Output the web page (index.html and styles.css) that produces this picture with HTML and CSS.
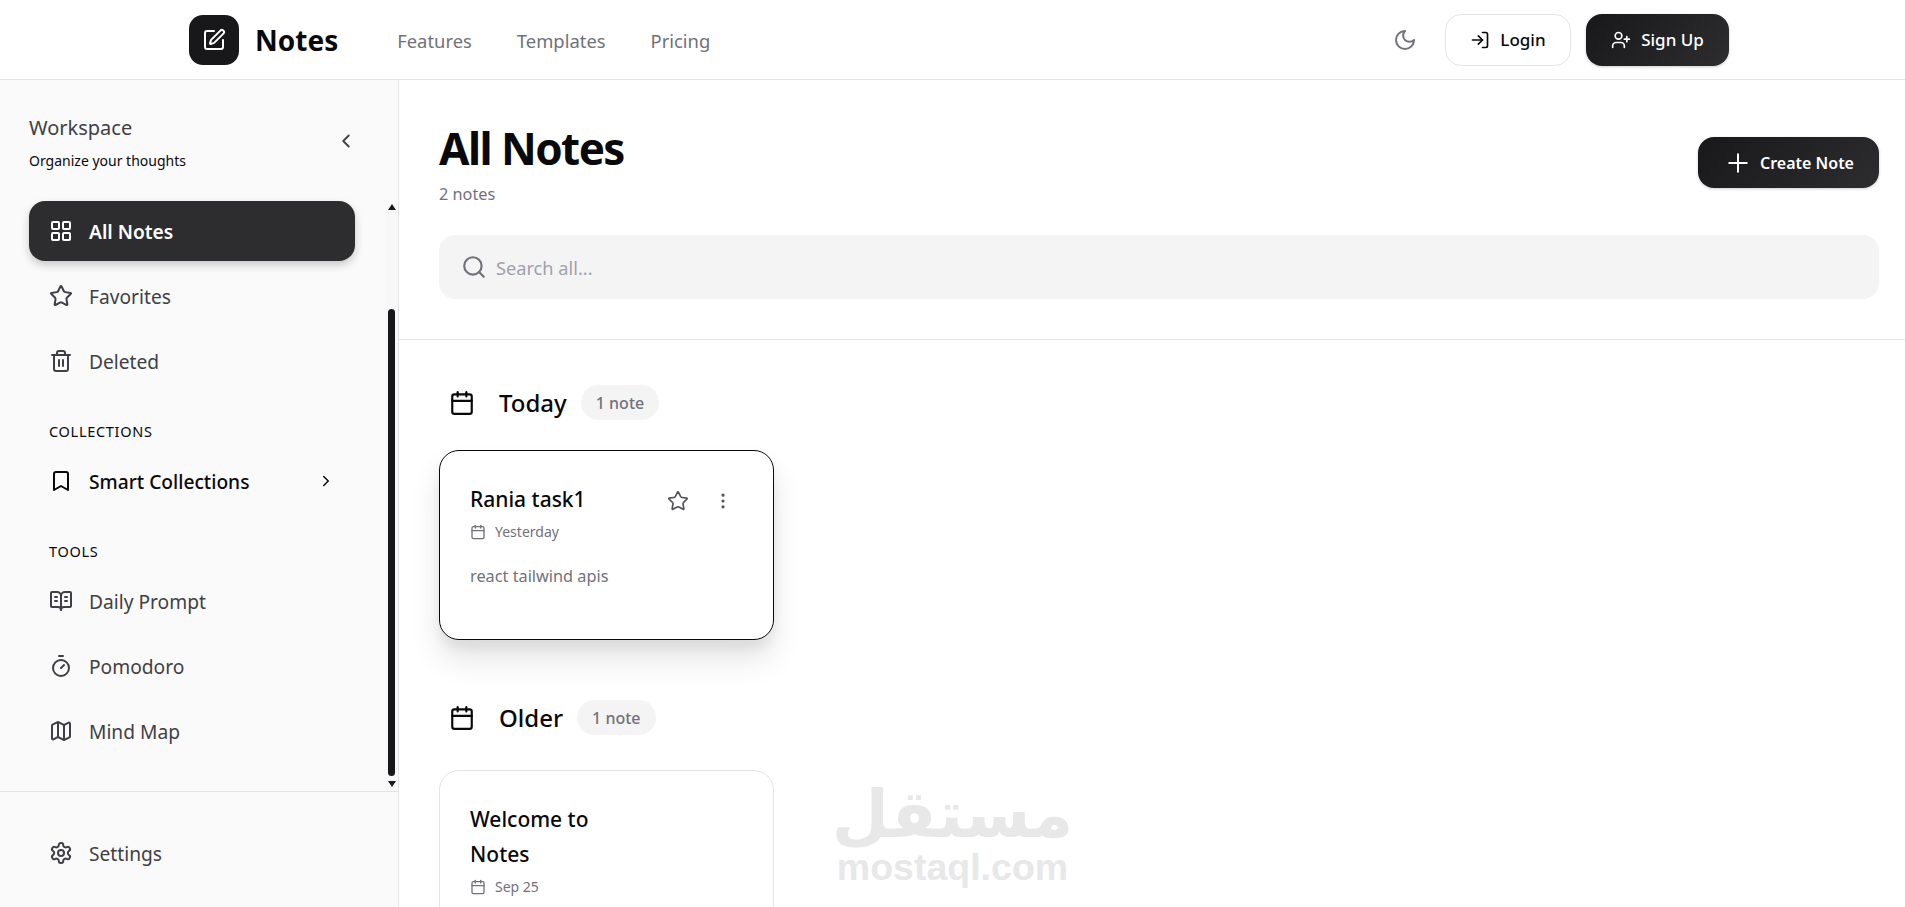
FILE: index.html
```html
<!DOCTYPE html>
<html lang="en">
<head>
<meta charset="utf-8">
<title>Notes</title>
<link rel="stylesheet" href="styles.css">
</head>
<body>
<svg class="defs" width="0" height="0">
  <symbol id="i-pen" viewBox="0 0 24 24"><path d="M12 3H5a2 2 0 0 0-2 2v14a2 2 0 0 0 2 2h14a2 2 0 0 0 2-2v-7"/><path d="M18.375 2.625a1 1 0 0 1 3 3l-9.013 9.014a2 2 0 0 1-.853.505l-2.873.84a.5.5 0 0 1-.62-.62l.84-2.873a2 2 0 0 1 .506-.852z"/></symbol>
  <symbol id="i-moon" viewBox="0 0 24 24"><path d="M12 3a6 6 0 0 0 9 9 9 9 0 1 1-9-9Z"/></symbol>
  <symbol id="i-login" viewBox="0 0 24 24"><path d="M15 3h4a2 2 0 0 1 2 2v14a2 2 0 0 1-2 2h-4"/><path d="m10 17 5-5-5-5"/><path d="M15 12H3"/></symbol>
  <symbol id="i-userplus" viewBox="0 0 24 24"><path d="M16 21v-2a4 4 0 0 0-4-4H6a4 4 0 0 0-4 4v2"/><circle cx="9" cy="7" r="4"/><path d="M19 8v6"/><path d="M22 11h-6"/></symbol>
  <symbol id="i-plus" viewBox="0 0 24 24"><path d="M5 12h14"/><path d="M12 5v14"/></symbol>
  <symbol id="i-search" viewBox="0 0 24 24"><circle cx="11" cy="11" r="8"/><path d="m21 21-4.3-4.3"/></symbol>
  <symbol id="i-grid" viewBox="0 0 24 24"><rect x="3" y="3" width="7" height="7" rx="1"/><rect x="14" y="3" width="7" height="7" rx="1"/><rect x="14" y="14" width="7" height="7" rx="1"/><rect x="3" y="14" width="7" height="7" rx="1"/></symbol>
  <symbol id="i-star" viewBox="0 0 24 24"><path d="M11.525 2.295a.53.53 0 0 1 .95 0l2.31 4.679a2.123 2.123 0 0 0 1.595 1.16l5.166.756a.53.53 0 0 1 .294.904l-3.736 3.638a2.123 2.123 0 0 0-.611 1.878l.882 5.14a.53.53 0 0 1-.771.56l-4.618-2.428a2.122 2.122 0 0 0-1.973 0L6.396 21.01a.53.53 0 0 1-.77-.56l.881-5.139a2.122 2.122 0 0 0-.611-1.879L2.16 9.795a.53.53 0 0 1 .294-.906l5.165-.755a2.122 2.122 0 0 0 1.597-1.16z"/></symbol>
  <symbol id="i-trash" viewBox="0 0 24 24"><path d="M3 6h18"/><path d="M19 6v14c0 1-1 2-2 2H7c-1 0-2-1-2-2V6"/><path d="M8 6V4c0-1 1-2 2-2h4c1 0 2 1 2 2v2"/><path d="M10 11v6"/><path d="M14 11v6"/></symbol>
  <symbol id="i-bookmark" viewBox="0 0 24 24"><path d="m19 21-7-4-7 4V5a2 2 0 0 1 2-2h10a2 2 0 0 1 2 2v16z"/></symbol>
  <symbol id="i-book" viewBox="0 0 24 24"><path d="M12 7v14"/><path d="M16 12h2"/><path d="M16 8h2"/><path d="M3 18a1 1 0 0 1-1-1V4a1 1 0 0 1 1-1h5a4 4 0 0 1 4 4 4 4 0 0 1 4-4h5a1 1 0 0 1 1 1v13a1 1 0 0 1-1 1h-6a3 3 0 0 0-3 3 3 3 0 0 0-3-3z"/><path d="M6 12h2"/><path d="M6 8h2"/></symbol>
  <symbol id="i-timer" viewBox="0 0 24 24"><path d="M10 2h4"/><path d="m12 14 3-3"/><circle cx="12" cy="14" r="8"/></symbol>
  <symbol id="i-map" viewBox="0 0 24 24"><path d="M14.106 5.553a2 2 0 0 0 1.788 0l3.659-1.83A1 1 0 0 1 21 4.619v12.764a1 1 0 0 1-.553.894l-4.553 2.277a2 2 0 0 1-1.788 0l-4.212-2.106a2 2 0 0 0-1.788 0l-3.659 1.83A1 1 0 0 1 3 19.381V6.618a1 1 0 0 1 .553-.894l4.553-2.277a2 2 0 0 1 1.788 0z"/><path d="M15 5.764v15"/><path d="M9 3.236v15"/></symbol>
  <symbol id="i-gear" viewBox="0 0 24 24"><path d="M12.22 2h-.44a2 2 0 0 0-2 2v.18a2 2 0 0 1-1 1.73l-.43.25a2 2 0 0 1-2 0l-.15-.08a2 2 0 0 0-2.73.73l-.22.38a2 2 0 0 0 .73 2.73l.15.1a2 2 0 0 1 1 1.72v.51a2 2 0 0 1-1 1.74l-.15.09a2 2 0 0 0-.73 2.73l.22.38a2 2 0 0 0 2.73.73l.15-.08a2 2 0 0 1 2 0l.43.25a2 2 0 0 1 1 1.73V20a2 2 0 0 0 2 2h.44a2 2 0 0 0 2-2v-.18a2 2 0 0 1 1-1.73l.43-.25a2 2 0 0 1 2 0l.15.08a2 2 0 0 0 2.73-.73l.22-.39a2 2 0 0 0-.73-2.73l-.15-.08a2 2 0 0 1-1-1.74v-.5a2 2 0 0 1 1-1.74l.15-.09a2 2 0 0 0 .73-2.73l-.22-.38a2 2 0 0 0-2.73-.73l-.15.08a2 2 0 0 1-2 0l-.43-.25a2 2 0 0 1-1-1.73V4a2 2 0 0 0-2-2z"/><circle cx="12" cy="12" r="3"/></symbol>
  <symbol id="i-cal" viewBox="0 0 24 24"><path d="M8 2v4"/><path d="M16 2v4"/><rect x="3" y="4" width="18" height="18" rx="2"/><path d="M3 10h18"/></symbol>
  <symbol id="i-dots" viewBox="0 0 24 24"><circle cx="12" cy="12" r="1"/><circle cx="12" cy="5" r="1"/><circle cx="12" cy="19" r="1"/></symbol>
  <symbol id="i-left" viewBox="0 0 24 24"><path d="m15 18-6-6 6-6"/></symbol>
  <symbol id="i-right" viewBox="0 0 24 24"><path d="m9 18 6-6-6-6"/></symbol>
</svg>

<header class="topbar">
  <a class="brand">
    <span class="brand-mark"><svg class="icon icon-24"><use href="#i-pen"/></svg></span>
    <span class="brand-name">Notes</span>
  </a>
  <nav class="topnav">
    <a>Features</a>
    <a>Templates</a>
    <a>Pricing</a>
  </nav>
  <div class="top-actions">
    <button class="theme-btn"><svg class="icon icon-24"><use href="#i-moon"/></svg></button>
    <button class="btn btn-outline"><svg class="icon icon-20"><use href="#i-login"/></svg>Login</button>
    <button class="btn btn-dark"><svg class="icon icon-20"><use href="#i-userplus"/></svg>Sign Up</button>
  </div>
</header>

<div class="app">
  <aside class="sidebar">
    <div class="side-head">
      <div class="side-heading">
        <div class="side-title">Workspace</div>
        <div class="side-sub">Organize your thoughts</div>
      </div>
      <svg class="icon icon-22 side-collapse"><use href="#i-left"/></svg>
    </div>
    <div class="side-scroll">
      <nav class="side-nav">
        <a class="side-item active"><svg class="icon icon-24"><use href="#i-grid"/></svg>All Notes</a>
        <a class="side-item"><svg class="icon icon-24"><use href="#i-star"/></svg>Favorites</a>
        <a class="side-item"><svg class="icon icon-24"><use href="#i-trash"/></svg>Deleted</a>
        <div class="side-label">COLLECTIONS</div>
        <a class="side-item strong"><svg class="icon icon-24"><use href="#i-bookmark"/></svg><span class="grow">Smart Collections</span><svg class="icon icon-18"><use href="#i-right"/></svg></a>
        <div class="side-label">TOOLS</div>
        <a class="side-item"><svg class="icon icon-24"><use href="#i-book"/></svg>Daily Prompt</a>
        <a class="side-item"><svg class="icon icon-24"><use href="#i-timer"/></svg>Pomodoro</a>
        <a class="side-item"><svg class="icon icon-24"><use href="#i-map"/></svg>Mind Map</a>
      </nav>
      <div class="scrollbar">
        <span class="arrow-up"></span>
        <span class="thumb"></span>
        <span class="arrow-down"></span>
      </div>
    </div>
    <div class="side-foot">
      <a class="side-item"><svg class="icon icon-24"><use href="#i-gear"/></svg>Settings</a>
    </div>
  </aside>

  <main class="main">
    <section class="main-head">
      <div class="title-row">
        <div>
          <h1>All Notes</h1>
          <p class="count">2 notes</p>
        </div>
        <button class="btn btn-dark btn-create"><svg class="icon icon-plus"><use href="#i-plus"/></svg>Create Note</button>
      </div>
      <label class="search">
        <svg class="icon icon-26"><use href="#i-search"/></svg>
        <span class="search-text">Search all...</span>
      </label>
    </section>
    <section class="groups">
      <div class="group-head">
        <svg class="icon icon-26"><use href="#i-cal"/></svg>
        <h2>Today</h2>
        <span class="pill">1 note</span>
      </div>
      <article class="card card-hover">
        <div class="card-top">
          <h3>Rania task1</h3>
          <div class="card-actions">
            <span class="card-btn"><svg class="icon icon-22"><use href="#i-star"/></svg></span>
            <span class="card-btn"><svg class="icon icon-20"><use href="#i-dots"/></svg></span>
          </div>
        </div>
        <div class="card-date"><svg class="icon icon-16"><use href="#i-cal"/></svg>Yesterday</div>
        <p class="card-body">react tailwind apis</p>
      </article>
      <div class="group-head group-older">
        <svg class="icon icon-26"><use href="#i-cal"/></svg>
        <h2>Older</h2>
        <span class="pill">1 note</span>
      </div>
      <article class="card">
        <div class="card-top">
          <h3>Welcome to Notes</h3>
        </div>
        <div class="card-date"><svg class="icon icon-16"><use href="#i-cal"/></svg>Sep 25</div>
      </article>
    </section>
    <div class="watermark" lang="ar">
      <span class="wm-ar" dir="rtl">مستقل</span>
      <span class="wm-en">mostaql.com</span>
    </div>
  </main>
</div>
</body>
</html>
```

FILE: styles.css
```css
* { box-sizing: border-box; }
html, body { height: 100%; }
body {
  margin: 0;
  height: 907px;
  overflow: hidden;
  background: #fff;
  color: #09090b;
  font-family: "Noto Sans", "Open Sans", sans-serif;
  display: flex;
  flex-direction: column;
}
.defs { position: absolute; }
.icon {
  fill: none;
  stroke: currentColor;
  stroke-width: 2;
  stroke-linecap: round;
  stroke-linejoin: round;
  flex: none;
  display: block;
}
.icon-16 { width: 16px; height: 16px; }
.icon-18 { width: 18px; height: 18px; }
.icon-20 { width: 20px; height: 20px; }
.icon-22 { width: 22px; height: 22px; }
.icon-24 { width: 24px; height: 24px; }
.icon-26 { width: 26px; height: 26px; }
.icon-plus { width: 30px; height: 30px; stroke-width: 1.6; }

.topbar {
  height: 80px;
  flex: none;
  display: flex;
  align-items: center;
  padding: 0 176px 0 189px;
  border-bottom: 1px solid #e4e4e7;
}
.brand { display: flex; align-items: center; gap: 16px; }
.brand-mark {
  width: 50px;
  height: 50px;
  border-radius: 14px;
  background: #18181b;
  color: #fff;
  display: flex;
  align-items: center;
  justify-content: center;
}
.brand-name { font-size: 28px; font-weight: 700; line-height: 40px; }
.topnav { display: flex; gap: 45px; margin-left: 59px; padding-top: 2px; font-size: 18.4px; color: #71717a; }
.top-actions { margin-left: auto; display: flex; align-items: center; }
.theme-btn {
  border: 0;
  background: none;
  padding: 0;
  color: #71717a;
  margin-right: 28px;
}
.btn {
  display: flex;
  align-items: center;
  justify-content: center;
  gap: 10px;
  font-family: inherit;
  font-size: 17px;
  font-weight: 500;
  border-radius: 16px;
  height: 52px;
  padding: 0;
}
.btn-outline { width: 126px; background: #fff; border: 1px solid #e4e4e7; color: #09090b; margin-right: 15px; }
.btn-dark {
  width: 143px;
  border: 0;
  color: #fff;
  background: linear-gradient(135deg, #18181b, #2d2d30);
  box-shadow: 0 1px 3px rgba(0, 0, 0, .2);
}
.btn-create { width: 181px; height: 51px; gap: 7px; font-size: 16px; font-weight: 600; margin-top: 17px; }

.app { flex: 1; display: flex; min-height: 0; }

.sidebar {
  width: 399px;
  flex: none;
  background: #fafafa;
  border-right: 1px solid #e4e4e7;
  display: flex;
  flex-direction: column;
}
.side-head {
  height: 121px;
  flex: none;
  display: flex;
  align-items: center;
  justify-content: space-between;
  padding: 0 41px 0 29px;
}
.side-heading { margin-top: 3px; }
.side-title { font-size: 20px; line-height: 28px; color: #3f3f46; }
.side-sub { font-size: 14px; line-height: 20px; margin-top: 9px; }
.side-collapse { color: #3f3f46; }
.side-scroll { position: relative; flex: 1; min-height: 0; }
.side-nav { padding: 0 43px 0 29px; display: flex; flex-direction: column; gap: 5px; }
.side-item {
  height: 60px;
  display: flex;
  align-items: center;
  gap: 16px;
  padding: 0 20px;
  border-radius: 16px;
  font-size: 19.2px;
  color: #3f3f46;
}
.side-item.active {
  background: #2d2d30;
  color: #fff;
  font-weight: 600;
  box-shadow: 0 4px 8px rgba(0, 0, 0, .2);
}
.side-item.strong { color: #09090b; font-weight: 500; }
.grow { flex: 1; }
.side-label {
  padding-left: 20px;
  margin-top: 25px;
  margin-bottom: 5px;
  font-size: 14.5px;
  line-height: 20px;
  letter-spacing: .7px;
  color: #09090b;
}
.scrollbar {
  position: absolute;
  top: 0;
  bottom: 0;
  right: 0;
  width: 13px;
  background: #f8f8f8;
  display: flex;
  flex-direction: column;
  align-items: center;
  padding-top: 3px;
}
.arrow-up { border: 4px solid transparent; border-top: 0; border-bottom: 6px solid #18181b; }
.thumb { width: 7px; height: 467px; margin-top: 99px; background: #18181b; border-radius: 4px; }
.arrow-down { border: 4px solid transparent; border-bottom: 0; border-top: 6px solid #18181b; margin-top: 5px; }
.side-foot {
  height: 116px;
  flex: none;
  border-top: 1px solid #e4e4e7;
  padding: 31px 43px 0 29px;
}

.main { position: relative; flex: 1; min-width: 0; overflow: hidden; }
.main-head { height: 260px; padding: 40px 26px 0 40px; border-bottom: 1px solid #e4e4e7; }
.title-row { display: flex; justify-content: space-between; align-items: flex-start; height: 115px; }
h1 { margin: 0; font-size: 44px; line-height: 56px; font-weight: 700; letter-spacing: -1.55px; color: #09090b; }
.count { margin: 6px 0 0; font-size: 16.3px; line-height: 24px; color: #71717a; }
.search {
  height: 64px;
  background: #f4f4f5;
  border-radius: 16px;
  display: flex;
  align-items: center;
  gap: 9px;
  padding-left: 22px;
  font-size: 18.2px;
  color: #a1a1aa;
}
.search .icon { color: #71717a; }
.search-text { padding-top: 2px; }

.groups { padding: 45px 26px 0 40px; }
.group-head { display: flex; align-items: center; height: 35px; margin-bottom: 35px; padding-left: 10px; }
.group-head h2 { margin: 0 14px 0 24px; font-size: 24px; font-weight: 500; line-height: 35px; }
.group-older { margin-top: 55px; }
.pill {
  height: 35px;
  padding: 1px 15px 0;
  border-radius: 18px;
  background: #f4f4f5;
  color: #71717a;
  font-size: 16px;
  font-weight: 500;
  line-height: 35px;
}
.card {
  width: 335px;
  height: 190px;
  padding: 30px;
  border: 1px solid #e4e4e7;
  border-radius: 20px;
  background: #fff;
}
.card-hover {
  border-color: #09090b;
  transform: translateY(-5px);
  box-shadow: 0 20px 30px rgba(0, 0, 0, .1), 0 8px 12px rgba(0, 0, 0, .06);
}
.card-top { display: flex; justify-content: space-between; }
h3 { margin: 0; width: 165px; padding-top: 1px; font-size: 21px; font-weight: 500; line-height: 35px; color: #09090b; }
.card-actions { display: flex; height: 35px; margin-right: -2px; color: #52525b; }
.card-btn { width: 45px; height: 40px; display: flex; align-items: center; justify-content: center; }
.card-btn .icon { stroke-width: 1.8; }
.card-date {
  display: flex;
  align-items: center;
  gap: 9px;
  margin-top: 3px;
  font-size: 14px;
  line-height: 24px;
  color: #71717a;
}
.card-body { margin: 20px 0 0; font-size: 16.3px; line-height: 24px; color: #71717a; }

.watermark {
  position: absolute;
  left: 439px;
  top: 704px;
  width: 229px;
  display: flex;
  flex-direction: column;
  align-items: center;
  color: #e8e8e8;
  font-weight: 700;
  pointer-events: none;
}
.wm-ar { font-family: "DejaVu Sans", sans-serif; font-size: 66px; line-height: 62px; }
.wm-en { font-family: "Liberation Sans", sans-serif; font-size: 37.5px; line-height: 42px; }
```
